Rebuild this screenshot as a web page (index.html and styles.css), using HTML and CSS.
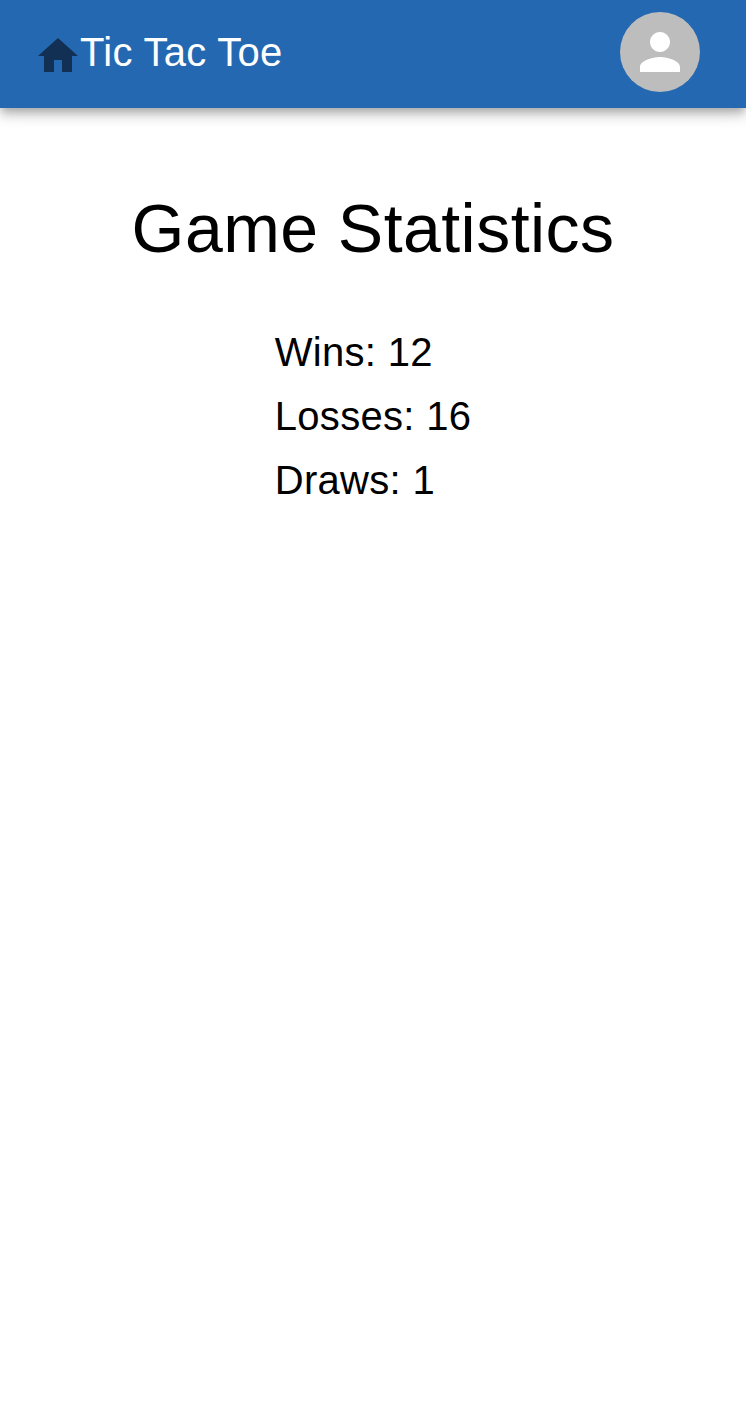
FILE: index.html
```html
<!DOCTYPE html>
<html lang="en">
<head>
<meta charset="utf-8">
<title>Tic Tac Toe</title>
<link rel="stylesheet" href="styles.css">
</head>
<body>
<header class="app-bar">
  <a class="brand">
    <svg class="home-icon" viewBox="0 0 24 24"><path d="M10 20v-6h4v6h5v-8h3L12 3 2 12h3v8z"/></svg>
    <span class="brand-name">Tic Tac Toe</span>
  </a>
  <div class="avatar">
    <svg class="person-icon" viewBox="0 0 24 24"><path d="M12 12c2.21 0 4-1.79 4-4s-1.79-4-4-4-4 1.79-4 4 1.79 4 4 4zm0 2c-2.67 0-8 1.34-8 4v2h16v-2c0-2.66-5.33-4-8-4z"/></svg>
  </div>
</header>
<main class="stats">
  <h1 class="title">Game Statistics</h1>
  <div class="results">
    <p class="result">Wins: 12</p>
    <p class="result">Losses: 16</p>
    <p class="result">Draws: 1</p>
  </div>
</main>
</body>
</html>
```
FILE: styles.css
```css
body {
  margin: 0;
  background: #fff;
  color: #000;
  font-family: "Liberation Sans", Arial, sans-serif;
}
.app-bar {
  display: flex;
  align-items: center;
  justify-content: space-between;
  box-sizing: border-box;
  height: 108px;
  padding: 0 46px 4px 34px;
  background: #2568b2;
  box-shadow: 0 4px 8px -2px rgba(0,0,0,.2), 0 8px 10px rgba(0,0,0,.14), 0 2px 20px rgba(0,0,0,.12);
}
.brand {
  display: flex;
  align-items: center;
}
.home-icon {
  width: 48px;
  height: 48px;
  margin-top: 8px;
  fill: #122f54;
}
.brand-name {
  margin-left: -2px;
  color: #fff;
  font-size: 40px;
  line-height: 60px;
  letter-spacing: .3px;
}
.avatar {
  display: flex;
  align-items: center;
  justify-content: center;
  width: 80px;
  height: 80px;
  border-radius: 50%;
  background: #bdbdbd;
}
.person-icon {
  width: 60px;
  height: 60px;
  fill: #fff;
}
.stats {
  display: flex;
  flex-direction: column;
  align-items: center;
}
.title {
  margin: 80px 0 52px;
  font-size: 68px;
  line-height: 80px;
  font-weight: 400;
  letter-spacing: .45px;
}
.result {
  margin: 0;
  font-size: 40px;
  line-height: 64px;
  letter-spacing: .3px;
}
```
